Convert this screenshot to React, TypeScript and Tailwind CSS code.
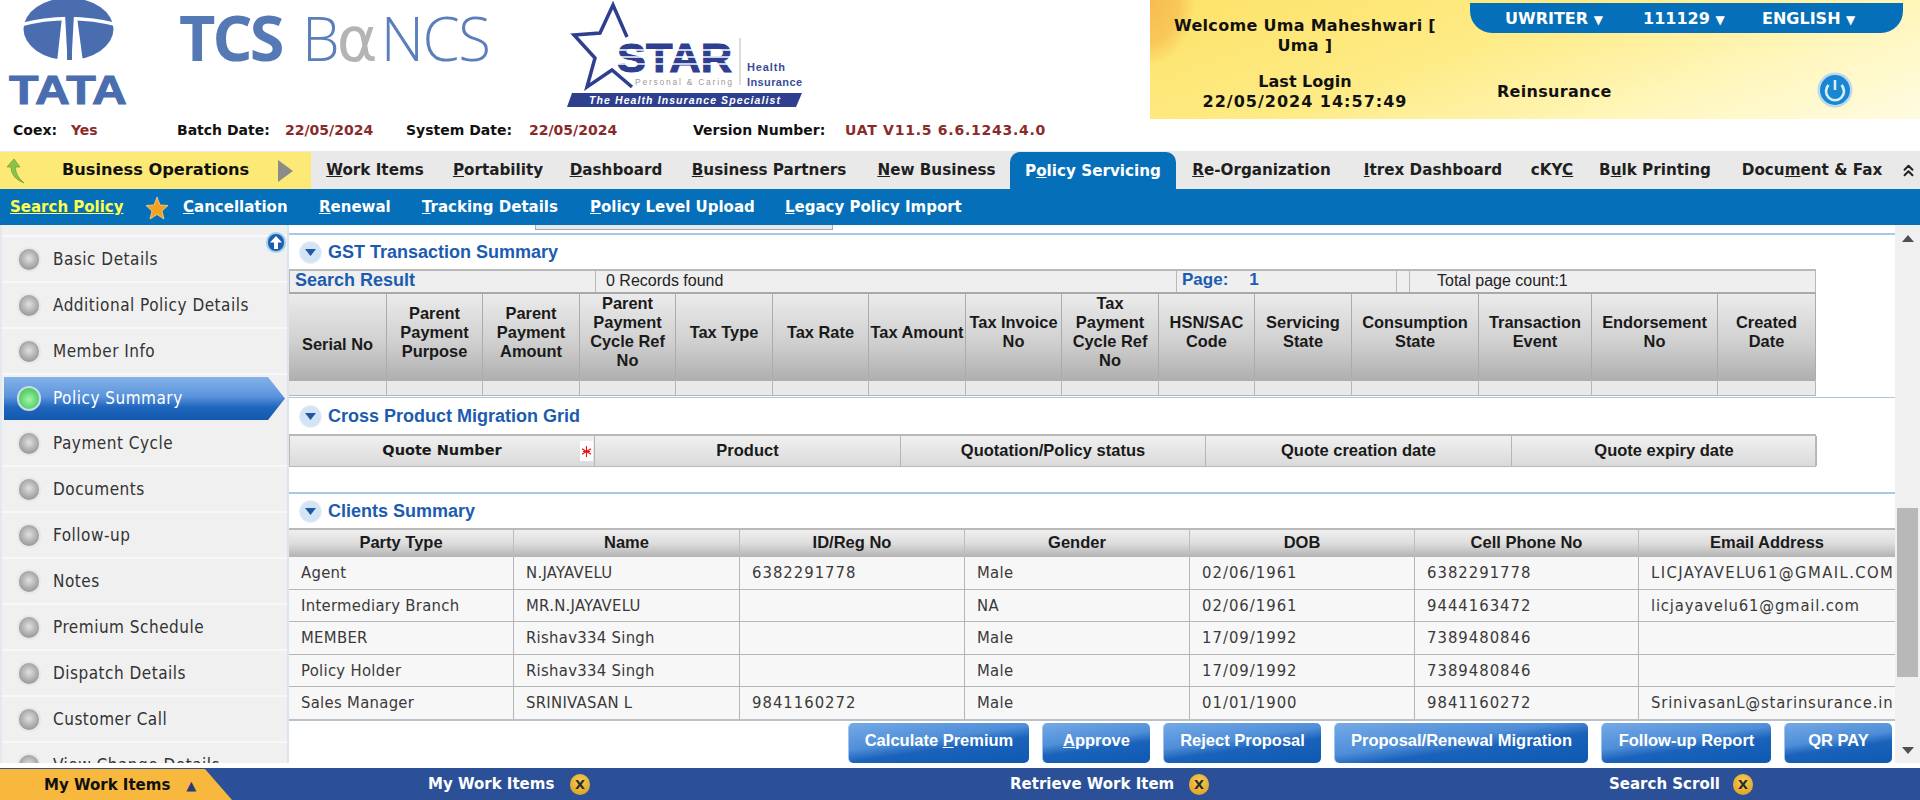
import React from 'react';
import { ChevronsUp } from 'lucide-react';

const tahoma = "font-['DejaVu_Sans_Condensed','DejaVu_Sans',sans-serif] [font-stretch:condensed]";
const tahomaBold = "font-['DejaVu_Sans',sans-serif] font-bold";
const arial = "font-['Liberation_Sans',Arial,sans-serif]";

const menuItems = [
  { pre: '', u: 'W', post: 'ork Items', w: 'w-[128px]' },
  { pre: '', u: 'P', post: 'ortability', w: 'w-[118px]' },
  { pre: '', u: 'D', post: 'ashboard', w: 'w-[118px]' },
  { pre: '', u: 'B', post: 'usiness Partners', w: 'w-[188px]' },
  { pre: '', u: 'N', post: 'ew Business', w: 'w-[147px]' },
  { pre: 'P', u: 'o', post: 'licy Servicing', w: 'w-[166px]', active: true },
  { pre: '', u: 'R', post: 'e-Organization', w: 'w-[171px]' },
  { pre: '', u: 'I', post: 'trex Dashboard', w: 'w-[172px]' },
  { pre: 'cKY', u: 'C', post: '', w: 'w-[66px]' },
  { pre: 'B', u: 'u', post: 'lk Printing', w: 'w-[140px]' },
  { pre: 'Docu', u: 'm', post: 'ent & Fax', w: 'w-[174px]' },
];

const subItems = [
  { u: 'C', post: 'ancellation', w: 'w-[136px]' },
  { u: 'R', post: 'enewal', w: 'w-[103px]' },
  { u: 'T', post: 'racking Details', w: 'w-[168px]' },
  { u: 'P', post: 'olicy Level Upload', w: 'w-[195px]' },
  { u: 'L', post: 'egacy Policy Import', w: 'w-[200px]' },
];

const sideItems = [
  'Basic Details',
  'Additional Policy Details',
  'Member Info',
  'Policy Summary',
  'Payment Cycle',
  'Documents',
  'Follow-up',
  'Notes',
  'Premium Schedule',
  'Dispatch Details',
  'Customer Call',
  'View Change Details',
];

const gstHeaders = [
  'Serial No',
  'Parent Payment Purpose',
  'Parent Payment Amount',
  'Parent Payment Cycle Ref No',
  'Tax Type',
  'Tax Rate',
  'Tax Amount',
  'Tax Invoice No',
  'Tax Payment Cycle Ref No',
  'HSN/SAC Code',
  'Servicing State',
  'Consumption State',
  'Transaction Event',
  'Endorsement No',
  'Created Date',
];
const gstCols = 'grid-cols-[98px_96px_97px_96px_97px_96px_97px_96px_97px_96px_97px_127px_113px_126px_98px]';
const clientCols = 'grid-cols-[225px_226px_225px_225px_225px_224px_257px]';

const clientHeaders = ['Party Type', 'Name', 'ID/Reg No', 'Gender', 'DOB', 'Cell Phone No', 'Email Address'];
const clients = [
  ['Agent', 'N.JAYAVELU', '6382291778', 'Male', '02/06/1961', '6382291778', 'LICJAYAVELU61@GMAIL.COM'],
  ['Intermediary Branch', 'MR.N.JAYAVELU', '', 'NA', '02/06/1961', '9444163472', 'licjayavelu61@gmail.com'],
  ['MEMBER', 'Rishav334 Singh', '', 'Male', '17/09/1992', '7389480846', ''],
  ['Policy Holder', 'Rishav334 Singh', '', 'Male', '17/09/1992', '7389480846', ''],
  ['Sales Manager', 'SRINIVASAN L', '9841160272', 'Male', '01/01/1900', '9841160272', 'SrinivasanL@starinsurance.in'],
];

const buttons = [
  { label: <>Calculate <u>P</u>remium</>, w: 'w-[181px]' },
  { label: <><u>A</u>pprove</>, w: 'w-[108px]' },
  { label: <>Reject Proposal</>, w: 'w-[158px]' },
  { label: <>Proposal/Renewal Migration</>, w: 'w-[254px]' },
  { label: <>Follow-up Report</>, w: 'w-[170px]' },
  { label: <>QR PAY</>, w: 'w-[108px]' },
];

// digits and mail addresses run wider in the reference than the stand-in font
const cellTracking = (cell: string) => {
  if (/GMAIL/.test(cell)) return 'tracking-[1.4px]';
  if (cell.includes('@')) return 'tracking-[0.8px]';
  if (/^[\d/]+$/.test(cell)) return 'tracking-[1px]';
  return 'tracking-[0.3px]';
};

const TataLogo = () => (
  <svg width="130" height="110" viewBox="0 0 130 110" className="shrink-0">
    <ellipse cx="68.5" cy="29" rx="45" ry="31" fill="#4a6db0" />
    <path d="M20 25 Q68 12 118 25" stroke="#fff" strokeWidth="3.5" fill="none" />
    <polygon points="62,17 67,17 67,62 57,62" fill="#fff" />
    <polygon points="72,17 77,17 83,62 72,62" fill="#fff" />
    <polygon points="65,14 74,14 71.5,60 67.5,60" fill="#4a6db0" />
    <text x="9" y="104" fontFamily="Liberation Sans" fontWeight="700" fontSize="40" fill="#4a6db0" textLength="118" lengthAdjust="spacingAndGlyphs" stroke="#4a6db0" strokeWidth="1">
      TATA
    </text>
  </svg>
);

const BancsLogo = () => (
  <div className="flex items-baseline ml-[49px] mt-[2px] h-[70px] w-[310px] leading-[70px] shrink-0 font-['Open_Sans',sans-serif]">
    <span className="w-[123px] shrink-0 text-[63px] font-bold text-[#5479b5] tracking-[-3px]">TCS</span>
    <span className="text-[60px] font-light text-[#5b7fbb]">B</span>
    <span className="text-[62px] font-['DejaVu_Sans',sans-serif] text-[#b4b4b4] -ml-[3px] w-[44px] shrink-0">α</span>
    <span className="text-[60px] font-light text-[#5b7fbb] tracking-[-1.5px]">NCS</span>
  </div>
);

const StarLogo = () => (
  <svg width="300" height="119" viewBox="0 0 300 119" className="shrink-0 ml-[51px]">
    <path d="M87 37 L73 5 L60 33 L34 35 L55 58 L47 87 L72 70 L92 87" fill="none" stroke="#2e3f8f" strokeWidth="3.5" />
    <text x="77" y="72" fontFamily="Liberation Sans" fontWeight="700" fontSize="41" fill="#2e3f8f" textLength="115" lengthAdjust="spacingAndGlyphs" stroke="#2e3f8f" strokeWidth="1">
      STAR
    </text>
    <path d="M76 50 H194 M76 57 H194 M76 64 H194" stroke="#fff" strokeWidth="1.5" />
    <text x="95" y="85" fontFamily="Liberation Sans" fontSize="8.5" fill="#9a9a9a" textLength="97">
      Personal &amp; Caring
    </text>
    <line x1="200" y1="38" x2="200" y2="85" stroke="#bbbbbb" strokeWidth="1" />
    <text x="207" y="71" fontFamily="Liberation Sans" fontWeight="700" fontSize="11" fill="#3b4c99" textLength="38">
      Health
    </text>
    <text x="207" y="86" fontFamily="Liberation Sans" fontWeight="700" fontSize="11" fill="#3b4c99" textLength="55">
      Insurance
    </text>
    <polygon points="32,93 262,93 256,107 27,107" fill="#2e3f8f" />
    <text x="49" y="104" fontFamily="Liberation Sans" fontWeight="700" fontStyle="italic" fontSize="10.5" fill="#fff" textLength="191">
      The Health Insurance Specialist
    </text>
  </svg>
);

const PowerIcon = () => (
  <svg width="36" height="36" viewBox="0 0 36 36">
    <circle cx="18" cy="18" r="17.5" fill="#bcd9f0" />
    <circle cx="18" cy="18" r="15" fill="#1a86cf" />
    <path d="M11.5 13 A9 9 0 1 0 24.5 13" fill="none" stroke="#d6eefc" strokeWidth="2.6" />
    <line x1="18" y1="8" x2="18" y2="18" stroke="#d6eefc" strokeWidth="2.6" />
  </svg>
);

const BackArrow = () => (
  <svg width="22" height="26" viewBox="0 0 22 26" className="shrink-0">
    <path d="M9 1 L2 9 H6 Q6 20 19 25 Q10 17 10.5 9 H15 Z" fill="#8bc34a" stroke="#6a9e2c" strokeWidth="0.7" />
  </svg>
);

const StarIcon = () => (
  <svg width="24" height="24" viewBox="0 0 24 24">
    <polygon points="12,1 15,9 23,9.5 17,15 19,23 12,18.5 5,23 7,15 1,9.5 9,9" fill="#f5a11f" stroke="#fbd38a" strokeWidth="0.8" />
  </svg>
);

const CollapseIcon = () => (
  <span className="w-[23px] h-[23px] shrink-0 rounded-full bg-[#d5e4f5] border border-[#e8f0fa] flex items-center justify-center">
    <svg width="11" height="7" viewBox="0 0 11 7">
      <polygon points="0,0 11,0 5.5,7" fill="#1c5aa8" />
    </svg>
  </span>
);

const CloseBadge = () => (
  <span className="w-[20px] h-[21px] shrink-0 rounded-full bg-[radial-gradient(circle_at_50%_35%,#f6cc55,#d99a1c)] flex items-center justify-center text-[13px] font-bold text-[#2b2b2b] leading-none">
    X
  </span>
);

const RequiredMark = () => (
  <svg width="9" height="11" viewBox="0 0 10 12">
    <path d="M5 0 V12 M0 3 L10 9 M10 3 L0 9 M1 6 H9" stroke="#ee1111" strokeWidth="1.2" />
  </svg>
);

const Bullet: React.FC<{ active?: boolean }> = ({ active }) => (
  <span
    className={
      active
        ? 'w-[24px] h-[25px] shrink-0 rounded-full border-2 border-[#c9dbea] bg-[radial-gradient(circle_at_50%_55%,#a8f5aa_0%,#5fd56f_55%,#35b84e_100%)]'
        : 'w-[24px] h-[25px] shrink-0 rounded-full border-2 border-[#e8e8e8] bg-[radial-gradient(circle_at_50%_45%,#e0e0e0_0%,#a6a6a6_60%,#828282_100%)]'
    }
  />
);

const SectionTitle: React.FC<{ title: string; className: string }> = ({ title, className }) => (
  <div className={`flex items-center pl-[10px] ${className}`}>
    <CollapseIcon />
    <span className={`${arial} ml-[6px] text-[18px] font-bold text-[#1c5cb0]`}>{title}</span>
  </div>
);

const TopHeader = () => (
  <div className="flex h-[119px]">
    <div className="flex w-[1150px] shrink-0">
      <TataLogo />
      <BancsLogo />
      <StarLogo />
    </div>
    <div className={`${tahomaBold} flex-1 relative text-[16px] text-[#111] bg-[radial-gradient(ellipse_45px_65px_at_0_0,#f7bb4e_0%,#f9c85a_65%,transparent_100%),linear-gradient(160deg,#fde268_0%,#feeb85_40%,#fff7c0_75%,#fffbe0_100%)]`}>
      <div className="flex h-full">
        <div className="w-[310px] flex flex-col items-center text-center shrink-0">
          <div className="mt-[16px] leading-[20px] tracking-[0.3px] whitespace-nowrap">
            Welcome Uma Maheshwari [<br />Uma ]
          </div>
          <div className="mt-[16px] leading-[20px] whitespace-nowrap">
            Last Login<br /><span className="tracking-[1px]">22/05/2024 14:57:49</span>
          </div>
        </div>
        <div className="w-[37px] shrink-0" />
        <div className="w-[320px] pt-[82px] leading-[20px] tracking-[0.3px] shrink-0">Reinsurance</div>
        <div className="pt-[72px]">
          <PowerIcon />
        </div>
      </div>
      <div className="absolute top-[3px] left-[320px] w-[433px] h-[30px] pt-[1px] bg-[#0570b9] rounded-b-[22px] flex items-center text-white">
        <span className="ml-[35px] w-[138px]">UWRITER <span className="text-[12px]">▼</span></span>
        <span className="w-[119px]">111129 <span className="text-[12px]">▼</span></span>
        <span>ENGLISH <span className="text-[12px]">▼</span></span>
      </div>
    </div>
  </div>
);

const InfoRow = () => (
  <div className={`${tahomaBold} h-[32px] flex items-center text-[14px] pb-[9px]`}>
    <span className="w-[71px] pl-[13px] shrink-0 text-[#111]">Coex:</span>
    <span className="w-[106px] shrink-0 text-[#8a2b2b]">Yes</span>
    <span className="w-[108px] shrink-0 text-[#111]">Batch Date:</span>
    <span className="w-[121px] shrink-0 text-[#8a2b2b]">22/05/2024</span>
    <span className="w-[123px] shrink-0 text-[#111]">System Date:</span>
    <span className="w-[164px] shrink-0 text-[#8a2b2b]">22/05/2024</span>
    <span className="w-[152px] shrink-0 text-[#111]">Version Number:</span>
    <span className="text-[#8a2b2b] tracking-[0.75px]">UAT V11.5 6.6.1243.4.0</span>
  </div>
);

const MenuBar = () => (
  <div className={`${tahomaBold} flex h-[38px] bg-[#e9e9e9] text-[15.2px] text-[#1f1f1f]`}>
    <div className="w-[311px] shrink-0 bg-[#fdea76] flex items-center pl-[5px] text-[#111] mt-[1px]">
      <BackArrow />
      <span className="ml-[35px] text-[16.2px] w-[216px] shrink-0">Business Operations</span>
      <span className="w-0 h-0 border-y-[11px] border-y-transparent border-l-[15px] border-l-[#8b8b8b]" />
    </div>
    {menuItems.map((item) => (
      <div
        key={item.pre + item.u + item.post}
        className={
          item.active
            ? `${item.w} shrink-0 flex items-center justify-center pt-[1px] bg-[#0570b9] text-white rounded-t-[10px] mt-[1px]`
            : `${item.w} shrink-0 flex items-center justify-center pt-[1px]`
        }
      >
        <span className="whitespace-nowrap">
          {item.pre}
          <u>{item.u}</u>
          {item.post}
        </span>
      </div>
    ))}
    <div className="flex-1 flex items-center justify-center pr-[6px] text-[#222]">
      <ChevronsUp size={19} strokeWidth={2.5} />
    </div>
  </div>
);

const SubNav = () => (
  <div className={`${tahomaBold} flex items-center h-[36px] pt-[1px] bg-[#0570b9] text-[15px] text-white`}>
    <span className="w-[134px] shrink-0 pl-[10px] text-[#ffff4d] underline">Search Policy</span>
    <span className="w-[49px] shrink-0 pl-[11px]">
      <StarIcon />
    </span>
    {subItems.map((item) => (
      <span key={item.u} className={`${item.w} shrink-0`}>
        <u>{item.u}</u>
        {item.post}
      </span>
    ))}
  </div>
);

const Sidebar = () => (
  <div className={`${tahoma} w-[289px] shrink-0 h-full overflow-hidden relative bg-[#f0f0f0] border-r-2 border-[#dbe5f0] border-l-2 border-l-[#e4e9f0] text-[17px] tracking-[0.5px] text-[#333]`}>
    <div className="h-[12px] border-b-2 border-[#f8f8f8]" />
    {sideItems.map((label) =>
      label === 'Policy Summary' ? (
        <div
          key={label}
          className="mx-[2px] mt-[2px] mb-[1px] h-[43px] flex items-center pl-[13px] text-white bg-[linear-gradient(180deg,#84b2e8_0%,#5b94dc_45%,#1f66bd_70%,#1259ae_100%)] [clip-path:polygon(0_0,calc(100%-17px)_0,100%_50%,calc(100%-17px)_100%,0_100%)]"
        >
          <Bullet active />
          <span className="ml-[12px]">{label}</span>
        </div>
      ) : (
        <div key={label} className="h-[46px] shrink-0 flex items-center pl-[15px] border-b-2 border-[#f8f8f8]">
          <Bullet />
          <span className="ml-[12px] pt-[1px]">{label}</span>
        </div>
      ),
    )}
    <span className="absolute top-[7px] right-[1px] w-[20px] h-[21px] rounded-full bg-[#1b5fb0] border-2 border-[#9fd0f0] flex items-center justify-center">
      <svg width="12" height="13" viewBox="0 0 12 13">
        <path d="M6 0 L12 6.5 H8 V13 H4 V6.5 H0 Z" fill="#fff" />
      </svg>
    </span>
  </div>
);

const GstSection = () => (
  <div className={`${arial} w-[1527px]`}>
    <div className="grid grid-cols-[305px_581px_220px_13px_408px] h-[23px] leading-[18px] border-t-2 border-x border-[#b9b9b9] bg-[#efefef] text-[16px] text-[#222]">
      <span className="pl-[5px] pb-[3px] flex items-center text-[18px] font-bold text-[#1c5cb0]">Search Result</span>
      <span className="pl-[10px] pb-[2px] border-l border-[#b9b9b9] flex items-center">0 Records found</span>
      <span className="pl-[5px] pb-[3px] border-l border-[#b9b9b9] flex items-center text-[17px] font-bold text-[#1c5cb0]">
        Page:<span className="ml-[21px]">1</span>
      </span>
      <span className="border-l border-[#b9b9b9]" />
      <span className="pl-[27px] pb-[2px] border-l border-[#b9b9b9] flex items-center">Total page count:1</span>
    </div>
    <div className={`grid ${gstCols} h-[87px] border-t-2 border-[#a9a9a9]`}>
      {gstHeaders.map((h) => (
        <div
          key={h}
          className={
            h === 'Serial No'
              ? 'flex items-center justify-center text-center pt-[14px] border-r border-[#ababab] text-[16.4px] leading-[19px] font-bold text-[#1a1a1a] bg-[linear-gradient(180deg,#ebebeb_0%,#d0d0d0_55%,#aeaeae_100%)]'
              : 'flex items-center justify-center text-center pb-[11px] border-r border-[#ababab] text-[16.4px] leading-[19px] font-bold text-[#1a1a1a] bg-[linear-gradient(180deg,#ebebeb_0%,#d0d0d0_55%,#aeaeae_100%)]'
          }
        >
          {h}
        </div>
      ))}
    </div>
    <div className={`grid ${gstCols} h-[17px] border-b border-[#b5b5b5] bg-[#e9e9e9]`}>
      {gstHeaders.map((h) => (
        <div key={h} className="border-r border-[#b5b5b5]" />
      ))}
    </div>
  </div>
);

const CrossSection = () => (
  <div className={`${arial} grid grid-cols-[305px_306px_305px_306px_305px] w-[1527px] h-[33px] border-y-2 border-[#b9b9b9] border-b border-x text-[16.5px] font-bold text-[#1a1a1a] bg-[linear-gradient(180deg,#f0f0f0,#dadada)]`}>
    <div className="relative flex items-center justify-center border-r border-[#b5b5b5]">
      <span className={`${tahomaBold} text-[14.5px]`}>Quote Number</span>
      <span className="absolute right-[1px] top-[5px] w-[13px] h-[20px] bg-white flex items-center justify-center">
        <RequiredMark />
      </span>
    </div>
    {['Product', 'Quotation/Policy status', 'Quote creation date', 'Quote expiry date'].map((h) => (
      <div key={h} className="flex items-center justify-center border-r border-[#b5b5b5] pb-[1px]">
        {h}
      </div>
    ))}
  </div>
);

const ClientsSection = () => (
  <div className="w-full overflow-hidden">
    <div className={`${arial} grid ${clientCols} h-[28px] border-t-2 border-[#b9b9b9] text-[16.5px] font-bold text-[#1a1a1a] bg-[linear-gradient(180deg,#efefef_0%,#dedede_50%,#b6b6b6_100%)]`}>
      {clientHeaders.map((h) => (
        <div key={h} className="flex items-center justify-center border-r border-[#bcbcbc] pb-[2px] leading-[20px]">
          {h}
        </div>
      ))}
    </div>
    {clients.map((row) => (
      <div key={row[0]} className={`${tahoma} grid ${clientCols} h-[32.6px] border-t border-[#b5b5b5] bg-[#f7f7f7] text-[16.5px] text-[#3a3a3a]`}>
        {row.map((cell, i) => (
          <div key={i} className={`${cellTracking(cell)} flex items-center pl-[12px] pt-[1px] border-r border-[#b5b5b5] whitespace-nowrap overflow-hidden`}>
            {cell}
          </div>
        ))}
      </div>
    ))}
    <div className="h-[2px] bg-[#b9c2cc]" />
  </div>
);

const ActionButtons = () => (
  <div className={`${arial} flex justify-end gap-[13px] pr-[3px] mt-[2px]`}>
    {buttons.map((b, i) => (
      <button
        key={i}
        className={`${b.w} h-[40px] pb-[6px] rounded-[5px] text-[16.5px] font-bold text-white border-l border-[#9fc3ec] bg-[linear-gradient(172deg,#74a9e6_0%,#4f8ed8_42%,#1a62ba_60%,#0f59b2_100%)]`}
      >
        {b.label}
      </button>
    ))}
  </div>
);

const MainContent = () => (
  <div className="w-[1606px] shrink-0 h-full overflow-hidden flex flex-col bg-white">
    <div className="ml-[246px] w-[298px] h-[5px] shrink-0 bg-[#e8e8e8] border-x border-b border-[#aaaaaa]" />
    <div className="mt-[3px] h-[2px] shrink-0 bg-[#a9c8e6]" />
    <SectionTitle title="GST Transaction Summary" className="h-[34px] shrink-0" />
    <GstSection />
    <div className="h-[1px] mt-[1px] shrink-0 bg-[#a9c8e6]" />
    <SectionTitle title="Cross Product Migration Grid" className="h-[36px] shrink-0" />
    <CrossSection />
    <div className="mt-[25px] h-[2px] shrink-0 bg-[#a9c8e6]" />
    <SectionTitle title="Clients Summary" className="h-[34px] shrink-0" />
    <ClientsSection />
    <ActionButtons />
  </div>
);

const Scrollbar = () => (
  <div className="flex-1 h-full bg-[#f0f0f0] flex flex-col items-center text-[#505050]">
    <svg width="12" height="7" viewBox="0 0 12 7" className="mt-[10px]">
      <polygon points="6,0 12,7 0,7" fill="currentColor" />
    </svg>
    <div className="mt-[266px] w-[21px] h-[169px] bg-[#b8b8b8]" />
    <svg width="12" height="7" viewBox="0 0 12 7" className="mt-[70px]">
      <polygon points="0,0 12,0 6,7" fill="currentColor" />
    </svg>
  </div>
);

const Footer = () => (
  <div className={`${tahomaBold} mt-[5px] h-[32px] pt-[1px] flex items-center bg-[#2b5097] text-[15px] text-white`}>
    <div className="w-[232px] shrink-0 h-full flex items-center pl-[44px] pt-[2px] text-[#111] bg-[#f8b83e] [clip-path:polygon(0_0,205px_0,100%_100%,0_100%)]">
      My Work Items
      <span className="ml-[16px] text-[13px] text-[#2b3a7a]">▲</span>
    </div>
    <span className="ml-[196px] w-[142px] shrink-0">My Work Items</span>
    <CloseBadge />
    <span className="ml-[420px] w-[179px] shrink-0">Retrieve Work Item</span>
    <CloseBadge />
    <span className="ml-[400px] w-[124px] shrink-0">Search Scroll</span>
    <CloseBadge />
  </div>
);

export default function App() {
  return (
    <div className="w-[1920px] h-[800px] overflow-hidden bg-white">
      <TopHeader />
      <InfoRow />
      <MenuBar />
      <SubNav />
      <div className="flex h-[538px]">
        <Sidebar />
        <MainContent />
        <Scrollbar />
      </div>
      <Footer />
    </div>
  );
}
